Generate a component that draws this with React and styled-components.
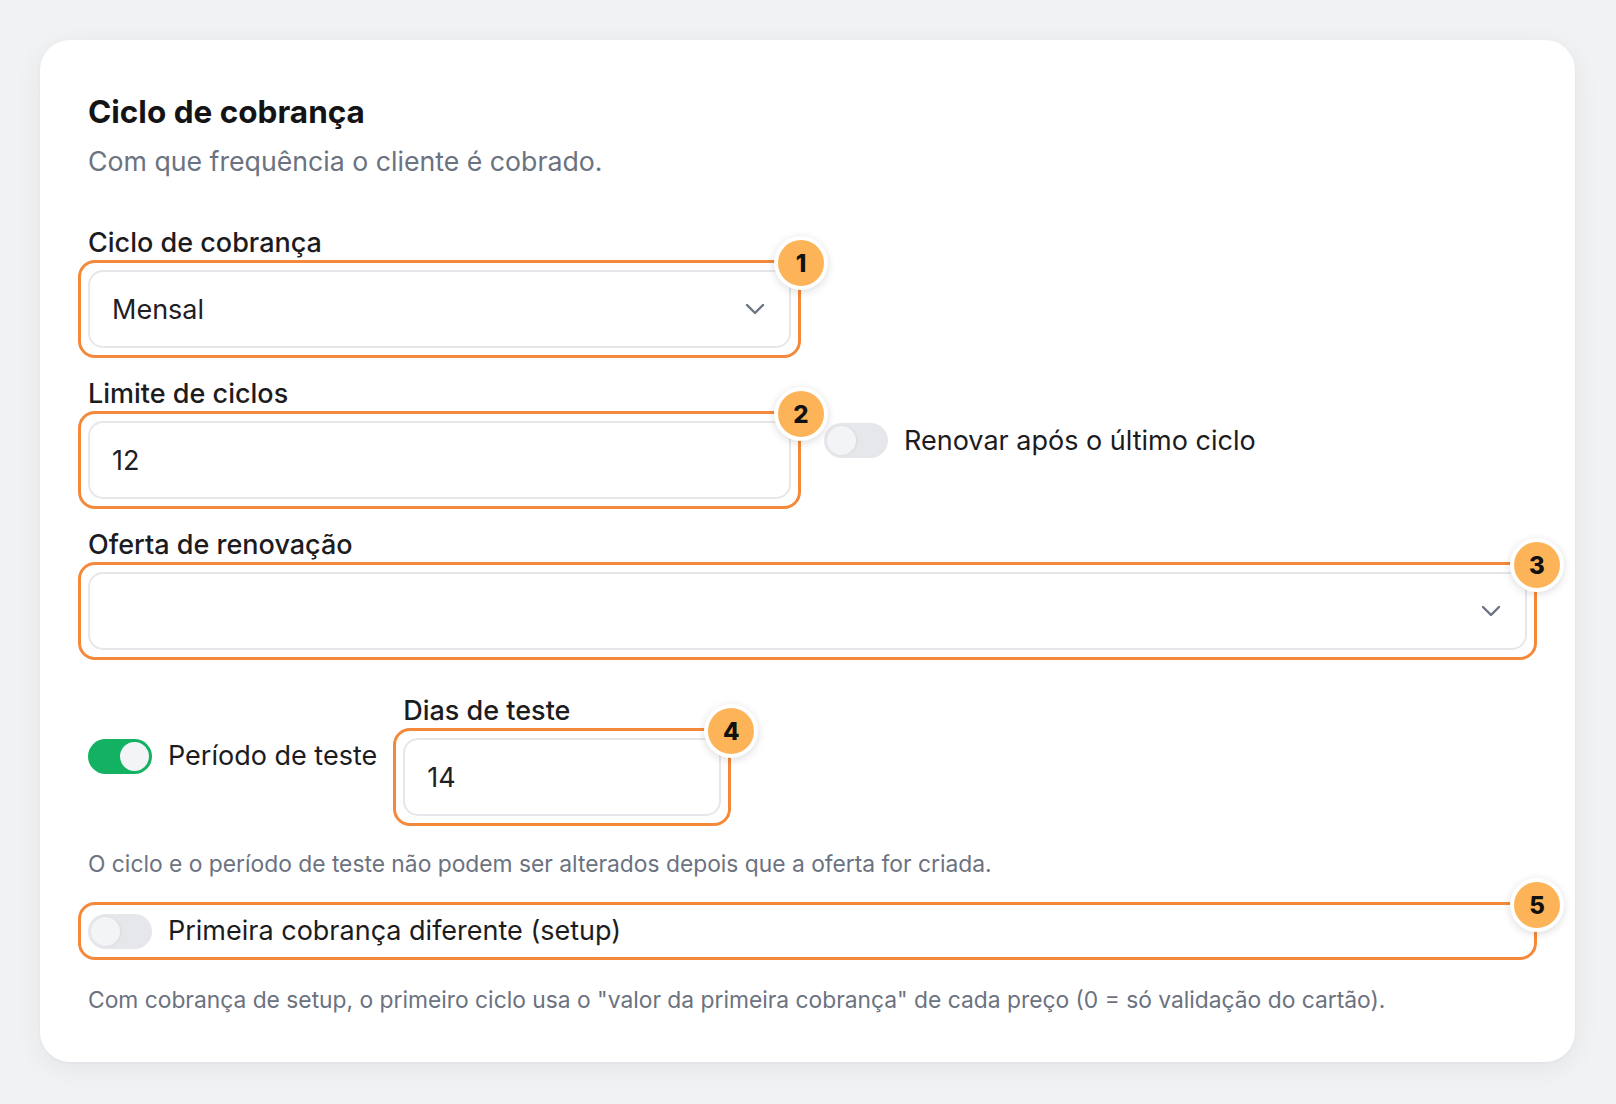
import styled, { createGlobalStyle } from "styled-components";

const GlobalStyle = createGlobalStyle`
  html, body {
    margin: 0;
    padding: 0;
    background: #f1f2f4;
  }
  body {
    font-family: Inter, "Noto Sans", "Liberation Sans", sans-serif;
    color: #18181b;
  }
  * { box-sizing: border-box; }
`;

const Page = styled.div`
  min-height: 1104px;
  padding: 40px 41px 40px 40px;
`;

const Card = styled.section`
  background: #fff;
  border-radius: 30px;
  box-shadow: 0 6px 28px rgba(15, 23, 42, 0.06), 0 1px 3px rgba(15, 23, 42, 0.04);
  padding: 53px 48px 46px;
`;

const Title = styled.h2`
  margin: 0;
  font-size: 31.5px;
  line-height: 37px;
  font-weight: 700;
  color: #141416;
`;

const Subtitle = styled.p`
  margin: 12px 0 43px;
  font-size: 26.7px;
  line-height: 39px;
  color: #6b7280;
`;

const Grid = styled.div`
  display: grid;
  grid-template-columns: 1fr 1fr;
  column-gap: 33px;
  row-gap: 27px;
`;

const Field = styled.div`
  grid-column: ${({ wide }) => (wide ? "1 / -1" : "auto")};
  width: ${({ width }) => (width ? `${width}px` : "auto")};
`;

const Label = styled.label`
  display: block;
  margin-bottom: 8px;
  font-size: 27px;
  line-height: 38px;
  font-weight: 500;
  color: #1c1c1f;
`;

const Marked = styled.div`
  position: relative;

  &::after {
    content: "";
    position: absolute;
    inset: -10px;
    border: 3px solid #f5893b;
    border-radius: 17px;
    pointer-events: none;
  }
`;

const Badge = styled.span`
  position: absolute;
  top: -34px;
  right: -37px;
  z-index: 2;
  width: 54px;
  height: 54px;
  border-radius: 50%;
  background: #fdb458;
  border: 4px solid #fff;
  box-shadow: 0 2px 8px rgba(0, 0, 0, 0.14);
  display: flex;
  align-items: center;
  justify-content: center;
  font-size: 24px;
  font-weight: 800;
  color: #111;
`;

const Box = styled.div`
  height: 78px;
  border: 2px solid #e6e7ea;
  border-radius: 15px;
  background: #fff;
  display: flex;
  align-items: center;
  justify-content: space-between;
  padding: 0 24px 0 22px;
  font-size: 27px;
  color: #1f2023;
`;

const Chevron = () => (
  <svg width="20" height="12" viewBox="0 0 20 12" fill="none">
    <polyline
      points="2,2 10,10 18,2"
      stroke="#6b7280"
      strokeWidth="2.4"
      strokeLinecap="round"
      strokeLinejoin="round"
    />
  </svg>
);

const Track = styled.span`
  flex: none;
  position: relative;
  width: 64px;
  height: 35px;
  border-radius: 18px;
  background: ${({ on }) => (on ? "#12b262" : "#e5e7eb")};

  &::after {
    content: "";
    position: absolute;
    top: 3px;
    left: ${({ on }) => (on ? "32px" : "3px")};
    width: 29px;
    height: 29px;
    border-radius: 50%;
    background: #f3f4f6;
    box-shadow: ${({ on }) => (on ? "none" : "1px 0 3px rgba(0,0,0,0.06)")};
  }
`;

const ToggleRow = styled.div`
  display: flex;
  align-items: center;
  gap: 16px;
  align-self: center;
  padding-top: ${({ shift }) => shift || 0}px;
  font-size: 27px;
  line-height: 38px;
  color: #1c1c1f;
`;

const TrialRow = styled.div`
  display: flex;
  align-items: center;
  gap: 26px;
  margin-top: 42px;
`;

const Help = styled.p`
  margin: ${({ top }) => top}px 0 0;
  font-size: 22.8px;
  line-height: 33px;
  color: #6b7280;
`;

const SetupRow = styled(Marked)`
  margin-top: 32px;
`;

const Toggle = ({ on, shift, children }) => (
  <ToggleRow shift={shift}>
    <Track on={on ? 1 : 0} />
    {children}
  </ToggleRow>
);

export default function App() {
  return (
    <>
      <GlobalStyle />
      <Page>
        <Card>
          <Title>Ciclo de cobrança</Title>
          <Subtitle>Com que frequência o cliente é cobrado.</Subtitle>

          <Grid>
            <Field>
              <Label>Ciclo de cobrança</Label>
              <Marked>
                <Box>
                  Mensal
                  <Chevron />
                </Box>
                <Badge>1</Badge>
              </Marked>
            </Field>
            <div />

            <Field>
              <Label>Limite de ciclos</Label>
              <Marked>
                <Box>12</Box>
                <Badge>2</Badge>
              </Marked>
            </Field>
            <Toggle shift={7}>Renovar após o último ciclo</Toggle>

            <Field wide>
              <Label>Oferta de renovação</Label>
              <Marked>
                <Box>
                  <span />
                  <Chevron />
                </Box>
                <Badge>3</Badge>
              </Marked>
            </Field>
          </Grid>

          <TrialRow>
            <Toggle on shift={4}>Período de teste</Toggle>
            <Field width={318}>
              <Label>Dias de teste</Label>
              <Marked>
                <Box>14</Box>
                <Badge>4</Badge>
              </Marked>
            </Field>
          </TrialRow>

          <Help top={31}>
            O ciclo e o período de teste não podem ser alterados depois que a oferta for criada.
          </Help>

          <SetupRow>
            <Toggle>Primeira cobrança diferente (setup)</Toggle>
            <Badge>5</Badge>
          </SetupRow>

          <Help top={33}>
            Com cobrança de setup, o primeiro ciclo usa o "valor da primeira cobrança" de cada preço (0 = só validação do cartão).
          </Help>
        </Card>
      </Page>
    </>
  );
}
